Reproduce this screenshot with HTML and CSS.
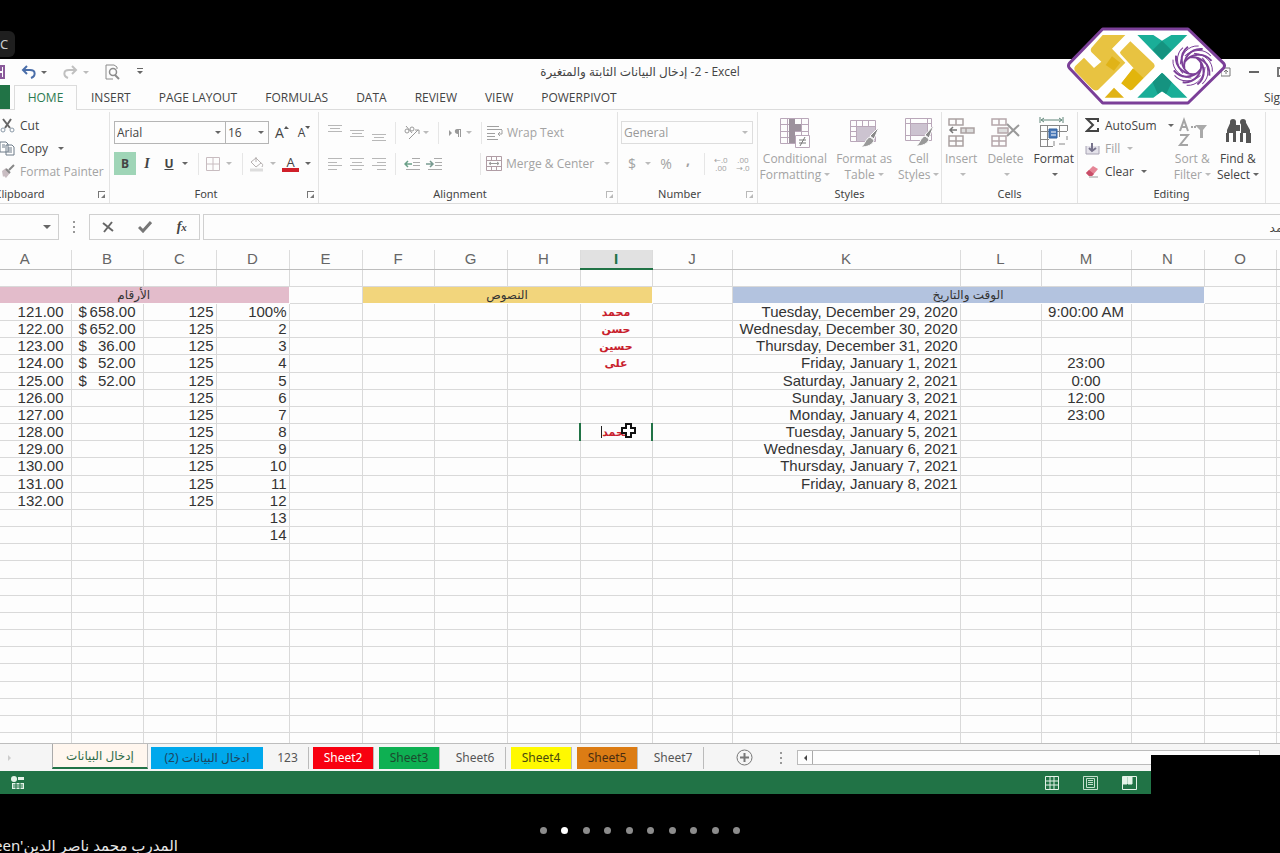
FILE: index.html
```html
<!DOCTYPE html>
<html lang="en">
<head>
    <meta charset="UTF-8">
    <meta name="viewport" content="width=device-width, initial-scale=1.0">
    <title>2- إدخال البيانات الثابتة والمتغيرة - Excel</title>
    <link rel="stylesheet" href="styles.css">
</head>
<body>

    <!-- Top strip -->
    <div class="top-strip"><span class="badge">C</span></div>

    <div class="excel">
        <!-- Title bar -->
        <div class="title-bar">
            <div class="quick">
                <button aria-label="Save"><svg width="14" height="14" viewBox="0 0 14 14" fill="none" stroke="#8a5a9a" stroke-width="2"><path d="M1 1h12v12H1zM4 1v4h6V1M4 13V9h6v4"/></svg></button>
                <button class="q-undo" aria-label="Undo"><svg width="15" height="14" viewBox="0 0 15 14" fill="none" stroke="#4a6ea9" stroke-width="2"><path d="M6 1L2 5l4 4M2 5h7c6 0 6 6 1 8"/></svg><i class="caret"></i></button>
                <button class="q-redo" aria-label="Redo"><svg width="15" height="14" viewBox="0 0 15 14" fill="none" stroke="#c0c0c0" stroke-width="2"><path d="M9 1l4 4-4 4M13 5H6C0 5 0 11 5 13"/></svg><i class="caret pale"></i></button>
                <button class="q-preview" aria-label="Print preview"><svg width="15" height="16" viewBox="0 0 15 16" fill="none" stroke="#8c8c8c"><path d="M12 5V3L9 1H1v14h7"/><circle cx="8" cy="8" r="3.500" stroke-width="1.500"/><path d="M10 11l4 4" stroke-width="2"/></svg></button>
                <button aria-label="Customize"><svg width="8" height="8" viewBox="0 0 8 8" fill="#666"><path d="M1 0h6v1H1zM1 3h6L4 6z"/></svg></button>
            </div>
            <div class="doc-title"><span dir="rtl">2- إدخال البيانات الثابتة والمتغيرة</span> - Excel</div>
            <div class="win">
                <svg width="10" height="10" viewBox="0 0 10 10" fill="none" stroke="#777"><path d="M0 1h9v8H0zM5 7V3M3 5l2-2 2 2"/></svg>
                <svg width="10" height="10" viewBox="0 0 10 10"><path d="M0 4h10v2H0z" fill="#666"/></svg>
                <svg width="10" height="10" viewBox="0 0 10 10" fill="none" stroke="#777" stroke-width="2"><path d="M1 1h8v8H1z"/></svg>
            </div>
        </div>

        <!-- Ribbon tabs -->
        <div class="tabs">
            <a class="file-tab" href="#" aria-label="File"></a>
            <a class="active" href="#">HOME</a>
            <a href="#">INSERT</a>
            <a href="#">PAGE LAYOUT</a>
            <a href="#">FORMULAS</a>
            <a href="#">DATA</a>
            <a href="#">REVIEW</a>
            <a href="#">VIEW</a>
            <a href="#">POWERPIVOT</a>
            <a class="sign" href="#">Sign in</a>
        </div>

        <!-- Ribbon -->
        <div class="ribbon">
            <div class="group clipboard">
                <div class="body">
                    <button><svg width="15" height="15" viewBox="0 0 15 15" fill="none"><path d="M3 1l7 9M11 1L5 10" stroke="#666" stroke-width="2"/><circle cx="3" cy="12" r="2" stroke="#8b9aa8"/><circle cx="12" cy="12" r="2" stroke="#8b9aa8"/></svg>Cut</button>
                    <button><svg width="15" height="15" viewBox="0 0 15 15" fill="#fff" stroke="#6d7b88"><path d="M0 1h6l2 2v8H0zM2 4h3M2 6h3M6 4h6l2 2v8H6z"/><path d="M8 7h4M8 9h4M8 11h4"/></svg>Copy<i class="caret"></i></button>
                    <button class="off"><svg width="15" height="15" viewBox="0 0 15 15"><path d="M2 7l4-3 4 5-4 5-2-2-1 1z" fill="#c9bdc2"/><path d="M6 5l4 4M9 6l5-5" stroke="#888" stroke-width="2"/></svg>Format Painter</button>
                </div>
                <div class="label">Clipboard<i class="launch"></i></div>
            </div>

            <div class="group font">
                <div class="body">
                    <div class="line">
                        <span class="combo face"><select aria-label="Font"><option>Arial</option></select><i class="caret"></i></span>
                        <span class="combo size"><select aria-label="Font size"><option>16</option></select><i class="caret"></i></span>
                        <button class="tool grow">A<svg width="5" height="4" viewBox="0 0 5 4"><path d="M0 3l2-3 3 3z" fill="#555"/></svg></button>
                        <button class="tool shrink">A<svg width="5" height="4" viewBox="0 0 5 4"><path d="M0 0h5L3 3z" fill="#555"/></svg></button>
                    </div>
                    <div class="line">
                        <button class="tool bold">B</button>
                        <button class="tool italic">I</button>
                        <button class="tool under">U</button>
                        <i class="caret"></i>
                        <i class="sep"></i>
                        <button class="tool" aria-label="Borders"><svg width="14" height="14" viewBox="0 0 14 14" fill="none" stroke="#c8bcc0"><path d="M.5.5h13v13H.5zM7 1v12M1 7h12"/></svg></button>
                        <i class="caret pale"></i>
                        <i class="sep"></i>
                        <button class="tool" aria-label="Fill color"><svg width="16" height="16" viewBox="0 0 16 16" fill="none" stroke="#b5b0b0"><path d="M2 6l5-4 5 5-5 4zM7 1v5M12 7c2 1 2 2 1 4"/><path d="M1 14h13" stroke="#ddd" stroke-width="3"/></svg></button>
                        <i class="caret pale"></i>
                        <button class="tool color">A</button>
                        <i class="caret"></i>
                    </div>
                </div>
                <div class="label">Font<i class="launch"></i></div>
            </div>

            <div class="group align">
                <div class="body">
                    <div class="line">
                        <button class="tool" aria-label="Top align"><svg width="14" height="16" viewBox="0 0 14 16" stroke="#b8b8b8"><path d="M0 .5h14M2 3.500h10M0 6.500h14"/></svg></button>
                        <button class="tool" aria-label="Middle align"><svg width="14" height="16" viewBox="0 0 14 16" stroke="#b8b8b8"><path d="M0 5.500h14M2 8.500h10M0 11.500h14"/></svg></button>
                        <button class="tool" aria-label="Bottom align"><svg width="14" height="16" viewBox="0 0 14 16" stroke="#b8b8b8"><path d="M0 9.500h14M2 12.500h10M0 15.500h14"/></svg></button>
                        <i class="sep"></i>
                        <button class="tool" aria-label="Orientation"><svg width="16" height="15" viewBox="0 0 16 15" fill="none" stroke="#999"><circle cx="3" cy="6" r="2"/><circle cx="8" cy="4" r="2"/><path d="M2 1l6 7M5 14l9-9M11 5h4v4"/></svg></button>
                        <i class="caret pale"></i>
                        <i class="sep"></i>
                        <button class="tool" aria-label="Text direction"><svg width="14" height="10" viewBox="0 0 14 10" fill="#999"><path d="M1 2l3 3-3 3zM13 1v8h-1V2h-1v7h-1V6C6 6 6 1 9 1z"/></svg></button>
                        <i class="caret pale"></i>
                        <i class="sep"></i>
                        <button class="wide off"><svg width="16" height="16" viewBox="0 0 16 16" fill="none" stroke="#a0a0a0"><path d="M0 1.500h12M0 4.500h15M0 8.500h8M0 11.500h8M0 14.500h11M15 5v4h-4M13 7l-2 2 2 2"/></svg>Wrap Text</button>
                    </div>
                    <div class="line">
                        <button class="tool" aria-label="Align left"><svg width="14" height="12" viewBox="0 0 14 12" stroke="#b8b8b8"><path d="M0 .5h14M0 4.500h9M0 7.500h14M0 11.500h9"/></svg></button>
                        <button class="tool" aria-label="Center"><svg width="14" height="12" viewBox="0 0 14 12" stroke="#b8b8b8"><path d="M0 .5h14M2 4.500h10M0 7.500h14M2 11.500h10"/></svg></button>
                        <button class="tool" aria-label="Align right"><svg width="14" height="12" viewBox="0 0 14 12" stroke="#b8b8b8"><path d="M0 .5h14M5 4.500h9M0 7.500h14M5 11.500h9"/></svg></button>
                        <i class="sep"></i>
                        <button class="tool" aria-label="Decrease indent"><svg width="16" height="12" viewBox="0 0 16 12" fill="none" stroke="#aaa"><path d="M8 .5h8M9 4.500h7M9 7.500h7M2 11.500h14"/><path d="M8 6H1M4 3L1 6l3 3" stroke="#6aa088" stroke-width="1.500"/></svg></button>
                        <button class="tool" aria-label="Increase indent"><svg width="16" height="12" viewBox="0 0 16 12" fill="none" stroke="#aaa"><path d="M8 .5h8M9 4.500h7M9 7.500h7M2 11.500h14"/><path d="M0 6h7M4 3l3 3-3 3" stroke="#789a90" stroke-width="1.500"/></svg></button>
                        <i class="gap"></i>
                        <i class="sep"></i>
                        <button class="wide off"><svg width="16" height="15" viewBox="0 0 16 15" fill="none" stroke="#b09da5"><path d="M.5.5h15v14H.5zM0 4.500h16M0 10.500h16M5.500 0v4M10.500 0v4M5.500 11v4M10.500 11v4"/><path d="M3 7.500h10M5 6L3 7.500 5 9M11 6l2 1.500L11 9" stroke="#999"/></svg>Merge &amp; Center<i class="caret pale"></i></button>
                    </div>
                </div>
                <div class="label">Alignment<i class="launch pale"></i></div>
            </div>

            <div class="group number">
                <div class="body">
                    <div class="line">
                        <span class="combo general"><select aria-label="Number format"><option>General</option></select><i class="caret pale"></i></span>
                    </div>
                    <div class="line off">
                        <button class="tool sign-cell">$</button>
                        <i class="caret pale"></i>
                        <button class="tool sign-cell">%</button>
                        <button class="tool sign-cell comma">,</button>
                        <i class="sep"></i>
                        <button class="tool decimals">←.0<br>.00</button>
                        <button class="tool decimals">.00<br>→.0</button>
                    </div>
                </div>
                <div class="label">Number<i class="launch pale"></i></div>
            </div>

            <div class="group styles">
                <div class="body big">
                    <button class="off"><svg width="32" height="32" viewBox="0 0 32 32" fill="none" stroke="#b9a7b9"><path d="M1.500 1.500h28v25h-28zM1 7.500h28M1 14.500h28M1 20.500h28M8.500 1v25M22.500 1v25"/><path d="M10 2h6v24h-6zM16 7h6v7h-6z" fill="#9d929d" stroke="none"/><path d="M16.500 18.500h14v12h-14z" fill="#fff"/><path d="M20 23h7M20 26h7M26 20l-5 9" stroke="#777"/></svg>Conditional<br>Formatting<i class="caret pale"></i></button>
                    <button class="off"><svg width="32" height="32" viewBox="0 0 32 32" fill="none" stroke="#b9a7b9"><path d="M2.500 3.500h25v21h-25zM2 9.500h25M2 14.500h25M2 19.500h25M8.500 3v21M14.500 3v21M20.500 3v21"/><path d="M9 10h18v14H9z" fill="#ccc3d0" stroke="none"/><path d="M31 10l-5 12-4-3z" fill="#888" stroke="#fff"/><path d="M22 20l4 3c-1 5-7 7-13 7 4-2 4-8 9-10z" fill="#999" stroke="#fff"/></svg>Format as<br>Table<i class="caret pale"></i></button>
                    <button class="off"><svg width="32" height="32" viewBox="0 0 32 32" fill="none" stroke="#b9a7b9"><path d="M2.500 1.500h26v22h-26zM2 6.500h26M2 18.500h26M7.500 1v22M24.500 1v22"/><path d="M8 7h16v11H8z" fill="#ccc3d0" stroke="none"/><path d="M31 8l-5 13-4-3z" fill="#888" stroke="#fff"/><path d="M22 19l4 3c-1 5-7 7-13 7 4-2 4-8 9-10z" fill="#999" stroke="#fff"/></svg>Cell<br>Styles<i class="caret pale"></i></button>
                </div>
                <div class="label">Styles</div>
            </div>

            <div class="group cells">
                <div class="body big">
                    <button class="off"><svg width="28" height="32" viewBox="0 0 28 32" fill="none" stroke="#aaa1a1" stroke-width="1.500"><path d="M2 2h14v6H2zM9 2v6M2 19h14v10H2zM9 19v10M2 24h14"/><path d="M14 11h13v5H14zM19 11v5" fill="#ddd"/><path d="M10 13H3M6 10l-3 3 3 3" stroke="#777"/></svg>Insert<br><i class="caret pale"></i></button>
                    <button class="off"><svg width="30" height="32" viewBox="0 0 30 32" fill="none" stroke="#b5a7ab" stroke-width="1.500"><path d="M2 2h14v6H2zM9 2v6M2 19h14v10H2zM9 19v10M2 24h14"/><path d="M8 11h10v5H8z" fill="#ddd"/><path d="M17 7l12 12M29 8L17 19" stroke="#999" stroke-width="2"/></svg>Delete<br><i class="caret pale"></i></button>
                    <button><svg width="30" height="32" viewBox="0 0 30 32" fill="none" stroke="#888"><path d="M1 0v6M24 0v6M3 3h19" stroke="#5e8578"/><path d="M5 1L2 3l3 2M20 1l3 2-3 2" stroke="#5e8578"/><path d="M1.500 8.500h27M1.500 8v22M1 14.500h27M8.500 8v21M20.500 8v12M28.500 8v6M1 22.500h9M1 29.500h13M15 29v-5M20 27h6M28 19v4"/><path d="M10 12h8v9h-8z" fill="#4a79b8" stroke="#2f5f9c"/><path d="M12 15h5M12 18h5" stroke="#fff"/></svg>Format<br><i class="caret"></i></button>
                </div>
                <div class="label">Cells</div>
            </div>

            <div class="group editing">
                <div class="body split">
                    <div class="stack">
                        <button><svg width="15" height="15" viewBox="0 0 15 15" fill="none" stroke="#444" stroke-width="2"><path d="M13 4V1H2l6 6-6 6h11v-3"/></svg>AutoSum<i class="caret"></i></button>
                        <button class="off"><svg width="15" height="15" viewBox="0 0 15 15" fill="none" stroke="#a8a4b4"><path d="M1 5v8h13V5" fill="#e4e2ea"/><path d="M7 2v8M4 7l3 3 4-3" stroke="#77738c" stroke-width="2"/></svg>Fill<i class="caret pale"></i></button>
                        <button><svg width="15" height="15" viewBox="0 0 15 15"><path d="M1 9l7-7 5 3-6 7H4z" fill="#e58596"/><path d="M1 9l3-3 5 4-2 2H4z" fill="#c84e68"/><path d="M4 13h9" stroke="#999"/></svg>Clear<i class="caret"></i></button>
                    </div>
                    <div class="big">
                        <button class="off"><svg width="30" height="32" viewBox="0 0 30 32" fill="none" stroke="#a5a5a5" stroke-width="2"><path d="M3 14L7 3l4 11M4 10h6M3 18h8L3 28h8"/><path d="M14 10h5" stroke-dasharray="2 1"/><path d="M18 8h12l-4 5v8h-3v-8z" fill="#aaa" stroke="none"/></svg>Sort &amp;<br>Filter<i class="caret pale"></i></button>
                        <button><svg width="28" height="32" viewBox="0 0 28 32" fill="#555"><path d="M7 4h4l1 3v9H3v-3zM17 4h4l5 9v3h-9V7z"/><circle cx="9" cy="5" r="3"/><circle cx="19" cy="5" r="3"/><path d="M2 16h3v9H2zM9 16h3v9H9zM16 16h3v9h-3zM22 16h5v10h-5zM12 8h4v6h-4z"/></svg>Find &amp;<br>Select<i class="caret"></i></button>
                    </div>
                </div>
                <div class="label">Editing</div>
            </div>
        </div>

        <!-- Formula bar -->
        <div class="formula-bar">
            <button class="name-box" aria-label="Name box"><i class="caret"></i></button>
            <span class="dots"><i></i><i></i><i></i></span>
            <div class="fx">
                <button aria-label="Cancel"><svg width="12" height="12" viewBox="0 0 12 12" stroke="#666" stroke-width="2"><path d="M1 2l10 8M10 1L2 11"/></svg></button>
                <button aria-label="Enter"><svg width="14" height="12" viewBox="0 0 14 12" fill="none" stroke="#777" stroke-width="3"><path d="M1 6l4 4 8-9"/></svg></button>
                <button aria-label="Insert function"><em>f<small>x</small></em></button>
            </div>
            <input class="formula" dir="rtl" value="محمد" aria-label="Formula">
        </div>

        <!-- Grid, filled by script.js -->
        <div class="grid">
            <table id="sheet"></table>
            <svg class="cursor" width="16" height="16" viewBox="0 0 16 16"><path d="M5 1h5v4h4v5h-4v4H5v-4H1V5h4z" fill="#fff" stroke="#111" stroke-width="2"/></svg>
        </div>

        <!-- Sheet tabs -->
        <div class="sheets">
            <span class="nav-arrow"></span>
            <button class="current">إدخال البيانات</button>
            <button class="blue" dir="rtl">ادخال البيانات (2)</button>
            <button class="s123">123</button>
            <button class="red">Sheet2</button>
            <button class="green">Sheet3</button>
            <button>Sheet6</button>
            <button class="yellow">Sheet4</button>
            <button class="orange">Sheet5</button>
            <button>Sheet7</button>
            <button class="add" aria-label="New sheet"><svg width="17" height="17" viewBox="0 0 17 17" fill="none" stroke="#777"><circle cx="8.500" cy="8.500" r="7.500"/><path d="M4 8.500h9M8.500 4v9" stroke-width="2"/></svg></button>
            <span class="dots"><i></i><i></i><i></i></span>
            <div class="scroll"><button aria-label="Scroll left"></button></div>
        </div>

        <!-- Status bar -->
        <div class="status">
            <svg width="14" height="14" viewBox="0 0 14 14" fill="#e4f3e8"><circle cx="3" cy="3" r="3"/><path d="M7 1h6v3H7zM1 7h12v6H1z"/><path d="M2 9h10M2 11h10M5 7v6M9 7v6" stroke="#217346"/></svg>
            <div class="views">
                <svg width="14" height="14" viewBox="0 0 14 14" fill="none" stroke="#e4f3e8"><path d="M.5.5h13v13H.5zM0 5h14M0 9h14M5 0v14M9 0v14"/></svg>
                <svg width="15" height="14" viewBox="0 0 15 14" fill="none" stroke="#c4e0cd"><path d="M.5.5h14v13H.5zM3.500 2.500h8v9h-8zM5 4.500h5M5 6.500h5M5 8.500h5"/></svg>
                <svg width="15" height="14" viewBox="0 0 15 14" fill="none" stroke="#e4f3e8"><path d="M.5.5h14v13H.5z"/><path d="M1 1h4v7H1zM6 1h4v7H6z" fill="#e4f3e8"/></svg>
            </div>
        </div>
    </div>

    <!-- Bottom strip -->
    <div class="bottom-strip">
        <div class="slides"><i></i><i class="on"></i><i></i><i></i><i></i><i></i><i></i><i></i><i></i><i></i></div>
        <div class="caption">een'<bdi>المدرب محمد ناصر الدين</bdi></div>
    </div>

    <div class="mask"></div>

    <svg class="logo" width="160" height="78" viewBox="15 15 480 234">
        <path d="M122 21H378L485 124Q490 131 485 138L378 243H122L22 138Q17 131 22 124Z" fill="#fff" stroke="#7b3f98" stroke-width="9" stroke-linejoin="round"/>
        <path d="M122 39H190L150 80L190 122L108 204Q98 208 90 200L38 146Q34 138 40 132L66 107L96 138L118 119L88 90Q84 84 88 78Z" fill="#e8c341"/>
        <path d="M150 103L175 122L156 146L131 129Z" fill="#e0b317"/>
        <path d="M205 58L276 125Q280 131 276 137L212 202Q206 207 200 202L178 184L215 139L176 96Q172 92 176 88Z" fill="#e8c341"/>
        <path d="M213 139L244 168L212 202Q206 207 200 202L178 184Z" fill="#e2b50c"/>
        <path d="M156 197L186 227H128Z" fill="#e0b317"/>
        <path d="M226 39H274L300 56L328 39H376L304 111Q300 115 296 111Z" fill="#1aae98"/>
        <path d="M300 56L328 84L300 113L272 84Z" fill="#159380"/>
        <path d="M226 227L296 156Q300 151 305 156L376 227H328L300 208L274 227Z" fill="#1aae98"/>
        <path d="M300 152L329 181L313 216L300 208L287 216L272 181Z" fill="#159380"/>
        <g id="swirl" transform="translate(392 131)" fill="none" stroke="#7b3f98"></g>
    </svg>

    <script src="script.js"></script>
</body>
</html>
```
FILE: styles.css
```css
/* General Styles */
* {
    box-sizing: border-box;
}
body {
    margin: 0;
    height: 100vh;
    display: flex;
    flex-direction: column;
    position: relative;
    overflow: hidden;
    background: #000;
    color: #444;
    font-family: "Noto Sans", "DejaVu Sans", sans-serif;
    font-size: 12px;
    line-height: 16px;
}
button, select, input {
    margin: 0;
    padding: 0;
    border: 0;
    background: none;
    color: inherit;
    font: inherit;
    white-space: nowrap;
}
svg {
    flex: none;
}
a {
    color: inherit;
    text-decoration: none;
}

/* Strips above and below the window */
.top-strip {
    flex: none;
    height: 59px;
    padding-top: 31px;
}
.badge {
    display: block;
    width: 15px;
    height: 26px;
    border-radius: 0 6px 6px 0;
    background: #1f1f1f;
    color: #ccc;
    font-size: 13px;
    line-height: 26px;
}
.bottom-strip {
    flex: none;
    height: 59px;
    padding-top: 33px;
    overflow: hidden;
}
.slides {
    display: flex;
    justify-content: space-between;
    width: 201px;
    margin: 0 auto;
}
.slides i {
    width: 7px;
    height: 7px;
    border-radius: 50%;
    background: #8c8c8c;
}
.slides i.on {
    background: #fff;
}
.caption {
    margin-left: -6px;
    color: #e8e8e8;
    font-size: 15px;
    line-height: 22px;
    white-space: nowrap;
}

/* Excel window */
.excel {
    flex: 1;
    min-height: 0;
    display: flex;
    flex-direction: column;
    background: #fdfdfd;
}
.title-bar, .tabs, .ribbon {
    font-family: "Open Sans", "DejaVu Sans", sans-serif;
}
.title-bar {
    flex: none;
    height: 26px;
    display: grid;
    grid-template-columns: 1fr auto 1fr;
    align-items: center;
}
.quick {
    display: flex;
    align-items: center;
    margin-left: -9px;
    gap: 16px;
}
.quick button {
    display: flex;
    align-items: center;
    gap: 5px;
}
.win {
    display: flex;
    justify-content: flex-end;
    align-items: center;
    gap: 18px;
    margin-right: -7px;
}

/* Small arrows and separators */
.caret {
    flex: none;
    display: inline-block;
    border: 3px solid transparent;
    border-top-color: #666;
    border-bottom: 0;
}
.caret.pale {
    border-top-color: #bbb;
}
.sep {
    width: 1px;
    height: 22px;
    margin: 0 5px;
    background: #e6e6e6;
}
.dots {
    display: flex;
    flex-direction: column;
    gap: 3px;
}
.dots i {
    width: 2px;
    height: 2px;
    background: #999;
}

/* Ribbon tabs */
.tabs {
    flex: none;
    height: 25px;
    display: flex;
    border-bottom: 1px solid #dcdcdc;
    white-space: nowrap;
}
.tabs a {
    padding: 0 14px;
    line-height: 25px;
}
.tabs .file-tab {
    width: 10px;
    padding: 0;
    margin-right: 4px;
    background: #217346;
}
.tabs .active {
    height: 25px;
    width: 63px;
    padding: 0;
    text-align: center;
    line-height: 23px;
    border: 1px solid #dcdcdc;
    border-bottom: 0;
    background: #fdfdfd;
    color: #2c7a50;
}
.tabs .sign {
    margin-left: auto;
    margin-right: -21px;
    padding: 0;
}

/* Ribbon */
.ribbon {
    flex: none;
    height: 94px;
    display: flex;
    border-bottom: 1px solid #dcdcdc;
}
.group {
    flex: none;
    display: flex;
    flex-direction: column;
    border-right: 1px solid #e3e3e3;
    margin-top: 2px;
}
.body {
    flex: 1;
    padding-top: 2px;
}
.label {
    position: relative;
    height: 18px;
    line-height: 18px;
    text-align: center;
    font-family: "Noto Sans", sans-serif;
    font-size: 11px;
}
.font .label, .align .label, .number .label {
    padding-right: 16px;
}
.launch {
    position: absolute;
    right: 4px;
    bottom: 5px;
    width: 7px;
    height: 7px;
    border-top: 1px solid #777;
    border-left: 1px solid #777;
}
.launch::after {
    content: "";
    position: absolute;
    right: 0;
    bottom: 0;
    border: 2px solid #777;
    border-top-color: transparent;
    border-left-color: transparent;
}
.launch.pale {
    opacity: 0.5;
}
.off {
    color: #a3a3a3;
}
.line {
    display: flex;
    align-items: center;
    height: 31px;
}
.tool {
    flex: none;
    display: flex;
    align-items: center;
    justify-content: center;
    width: 22px;
    height: 23px;
}
.wide {
    display: flex;
    align-items: center;
    gap: 4px;
}
.line .wide .caret {
    margin-left: 6px;
}

.clipboard {
    width: 180px;
    margin-left: -70px;
}
.clipboard .body {
    padding-left: 70px;
}
.clipboard button, .stack button {
    display: flex;
    align-items: center;
    gap: 5px;
    height: 23px;
}
.clipboard .caret {
    margin-left: 5px;
}

.font {
    width: 209px;
}
.font .body, .align .body, .number .body {
    padding-top: 5px;
}
.font .body {
    padding-left: 4px;
}
.combo {
    display: flex;
    align-items: center;
    height: 23px;
    border: 1px solid #b5b5b5;
    padding-right: 4px;
}
.combo select {
    flex: 1;
    min-width: 0;
    padding-left: 2px;
    appearance: none;
}
.face {
    width: 112px;
}
.size {
    width: 44px;
    margin-left: -1px;
}
.grow {
    font-size: 14px;
}
.shrink {
    font-size: 12px;
}
.tool.grow {
    margin-left: 2px;
}
.grow svg, .shrink svg {
    align-self: flex-start;
    margin-top: 5px;
}
.bold {
    background: #9fd5b7;
    font-weight: bold;
}
.italic {
    font-family: "Liberation Serif", serif;
    font-weight: bold;
    font-style: italic;
    font-size: 14px;
}
.under {
    font-weight: bold;
    text-decoration: underline;
}
.font .tool + .caret {
    margin: 0 2px;
}
.font .line .sep {
    margin: 0 3px 0 8px;
}
.line .color {
    height: 17px;
    width: 17px;
    margin: 0 4px;
    border-bottom: 4px solid #d0202a;
    font-size: 13px;
}

.align {
    width: 299px;
}
.align .body {
    padding-left: 5px;
}
.align .caret {
    margin-right: 4px;
}
.align .gap {
    width: 30px;
}

.number {
    width: 140px;
}
.number .body {
    padding-left: 3px;
}
.general {
    width: 132px;
    border-color: #ddd;
    color: #999;
}
.sign-cell {
    font-size: 14px;
}
.sign-cell + .caret {
    margin: 0 4px 0 2px;
}
.comma {
    font-weight: bold;
    align-items: flex-start;
}
.decimals {
    font-size: 8px;
    line-height: 8px;
}

.big {
    display: flex;
    justify-content: center;
    gap: 6px;
    padding-top: 5px;
}
.big button {
    display: block;
    text-align: center;
    align-self: flex-start;
}
.big svg {
    display: block;
    margin: 0 auto 2px;
}
.big .caret {
    margin-left: 3px;
    vertical-align: 3px;
}
.styles {
    width: 184px;
}
.cells {
    width: 136px;
}
.cells .big {
    gap: 10px;
}
.editing {
    width: 188px;
}
.split {
    display: flex;
    justify-content: space-between;
    padding: 2px 6px 0 7px;
}
.split .big {
    padding-top: 3px;
}
.stack .caret {
    margin-left: 2px;
}
.stack button:first-child .caret {
    margin-left: 6px;
}

/* Formula bar */
.formula-bar {
    flex: none;
    display: flex;
    align-items: center;
    height: 46px;
    overflow: hidden;
}
.name-box {
    width: 59px;
    height: 26px;
    border: 1px solid #d0d0d0;
    border-left: 0;
    padding-right: 7px;
    text-align: right;
}
.name-box .caret {
    border-width: 4px 4px 0;
    vertical-align: 2px;
}
.formula-bar .dots {
    margin: 0 14px;
}
.fx {
    display: flex;
    justify-content: space-around;
    align-items: center;
    width: 111px;
    height: 26px;
    border: 1px solid #d0d0d0;
}
.fx svg {
    display: block;
}
.fx em {
    font-family: "Liberation Serif", serif;
    font-size: 14px;
    font-weight: bold;
}
.fx small {
    font-size: 11px;
}
.formula {
    flex: 1;
    height: 26px;
    margin-left: 3px;
    margin-right: -18px;
    border: 1px solid #d0d0d0;
}

/* Grid */
.grid {
    flex: 1;
    min-height: 0;
    position: relative;
    overflow: hidden;
}
#sheet {
    table-layout: fixed;
    width: 1369px;
    margin-left: -21px;
    border-collapse: collapse;
    font-family: "Liberation Sans", "DejaVu Sans", sans-serif;
    font-size: 15px;
    line-height: 16px;
    color: #333;
}
#sheet th {
    height: 19px;
    padding: 0;
    border-right: 1px solid #dcdcdc;
    border-bottom: 1px solid #bdbdbd;
    color: #666;
    font-weight: normal;
}
#sheet th.selected {
    background: #e1e1e1;
    border-bottom: 2px solid #217346;
    color: #217346;
    font-weight: bold;
}
#sheet td {
    height: 17px;
    padding: 0 2px;
    border-right: 1px solid #d9d9d9;
    border-bottom: 1px solid #d9d9d9;
    text-align: right;
    white-space: nowrap;
}
#sheet tr:nth-child(6n) td {
    height: 18px;
}
#sheet .col-a, #sheet .col-b {
    padding-right: 7px;
}
#sheet .col-b {
    padding-left: 7px;
}
.money {
    display: flex;
    justify-content: space-between;
}
#sheet .col-m {
    text-align: center;
}
#sheet .col-i {
    text-align: center;
    color: #c8202c;
    font-weight: bold;
    font-size: 11px;
}
#sheet .title {
    text-align: center;
    font-size: 12px;
    border-color: transparent;
}
.pink {
    background: #e3bccb;
}
.gold {
    background: #f2d57c;
}
.steel {
    background: #b3c3df;
}
#sheet .editing-cell {
    border-left: 2px solid #217346;
    border-right: 2px solid #217346;
}
.edit {
    border-left: 1px solid #222;
}
.cursor {
    position: absolute;
    left: 621px;
    top: 173px;
}

/* Sheet tabs */
.sheets {
    flex: none;
    display: flex;
    align-items: center;
    height: 28px;
    border-top: 1px solid #bdbdbd;
    background: #f5f5f5;
}
.nav-arrow {
    width: 52px;
    padding-left: 8px;
}
.nav-arrow::before {
    content: "";
    display: block;
    width: 0;
    border: 3px solid transparent;
    border-left-color: #ccc;
    border-right: 0;
}
.sheets > button {
    height: 22px;
    width: 61px;
    margin-right: 5px;
    border-right: 1px solid #bbb;
    color: #555;
}
.sheets > .current {
    width: 96px;
    height: 25px;
    align-self: flex-start;
    margin-right: 3px;
    border-bottom: 2px solid #217346;
    border-left: 1px solid #aaa;
    background: #fff6ee;
    color: #2f6b49;
}
.sheets > .blue {
    width: 112px;
    margin-right: 4px;
    background: #00a8ec;
    color: #1d4560;
    border: 0;
}
.sheets > .s123 {
    width: 42px;
    margin-right: 4px;
}
.sheets > .red {
    background: #f80010;
    color: #fff;
}
.sheets > .green {
    background: #0eb052;
    color: #1c4a2e;
}
.sheets > .yellow {
    background: #fff900;
    color: #4a4a10;
}
.sheets > .orange {
    background: #dc7c14;
    color: #4a2c10;
}
.sheets > .add {
    width: 17px;
    height: 17px;
    margin-left: 27px;
    border: 0;
    line-height: 0;
}
.sheets .dots {
    margin-left: 22px;
}
.scroll {
    flex: 1;
    display: flex;
    height: 15px;
    margin: 0 20px 0 15px;
    border: 1px solid #bbb;
    background: #fdfdfd;
}
.scroll button {
    width: 15px;
    border-right: 1px solid #aaa;
    display: flex;
    align-items: center;
    justify-content: center;
}
.scroll button::before {
    content: "";
    border: 3px solid transparent;
    border-right-color: #444;
    border-left: 0;
}

/* Status bar */
.status {
    flex: none;
    display: flex;
    align-items: center;
    justify-content: space-between;
    height: 23px;
    padding: 0 143px 0 11px;
    background: #217346;
}
.views {
    display: flex;
    gap: 24px;
}

/* Overlays */
.mask {
    position: absolute;
    right: 0;
    bottom: 59px;
    width: 129px;
    height: 39px;
    background: #000;
}
.logo {
    position: absolute;
    right: 53px;
    top: 27px;
}
```
FILE: script.js
```js
const widths = [92, 72, 73, 73, 73, 72, 73, 73, 72, 80, 228, 81, 90, 73, 72, 72];
const letters = 'ABCDEFGHIJKLMNOP'.split('');

const prices = ['658.00', '652.00', '36.00', '52.00', '52.00'];
const names = ['محمد', 'حسن', 'حسين', 'على'];
const dates = [
    'Tuesday, December 29, 2020', 'Wednesday, December 30, 2020', 'Thursday, December 31, 2020',
    'Friday, January 1, 2021', 'Saturday, January 2, 2021', 'Sunday, January 3, 2021',
    'Monday, January 4, 2021', 'Tuesday, January 5, 2021', 'Wednesday, January 6, 2021',
    'Thursday, January 7, 2021', 'Friday, January 8, 2021'
];
const times = ['9:00:00 AM', '', '', '23:00', '0:00', '12:00', '23:00'];

// content of one cell, n counts from the first data row
function cell(letter, n) {
    if (n < 0) return '';
    if (letter === 'A' && n < 12) return (121 + n) + '.00';
    if (letter === 'B' && prices[n]) return `<div class="money"><span>$</span><span>${prices[n]}</span></div>`;
    if (letter === 'C' && n < 12) return '125';
    if (letter === 'D' && n < 14) return n === 0 ? '100%' : String(n + 1);
    if (letter === 'I' && n === 7) return '<span class="edit">محمد</span>';
    if (letter === 'I') return names[n] || '';
    if (letter === 'K') return dates[n] || '';
    if (letter === 'M') return times[n] || '';
    return '';
}

let html = '<colgroup>' + widths.map(w => `<col style="width:${w}px">`).join('') + '</colgroup><thead><tr>';
html += letters.map(l => {
    if (l === 'P') return '<th></th>';
    return `<th${l === 'I' ? ' class="selected"' : ''}>${l}</th>`;
}).join('') + '</tr></thead><tbody>';

for (let r = 0; r < 28; r++) {
    if (r === 1) {
        html += '<tr><td colspan="4" class="title pink">الأرقام</td><td></td>' +
            '<td colspan="4" class="title gold">النصوص</td><td></td>' +
            '<td colspan="4" class="title steel">الوقت والتاريخ</td><td></td><td></td></tr>';
        continue;
    }
    html += '<tr>' + letters.map(l => {
        const active = l === 'I' && r === 9 ? ' editing-cell' : '';
        return `<td class="col-${l.toLowerCase()}${active}">${cell(l, r - 2)}</td>`;
    }).join('') + '</tr>';
}
document.getElementById('sheet').innerHTML = html + '</tbody>';

// rosette on the logo
let rings = '';
for (let i = 0; i < 8; i++) {
    rings += `<g transform="rotate(${i * 45})">
        <path d="M-25 8C-29 -20 -8 -54 30 -50" stroke-width="6"/>
        <path d="M-37 -4C-36 -32 -14 -62 18 -59" stroke-width="3"/></g>`;
}
document.getElementById('swirl').innerHTML = rings;
```
